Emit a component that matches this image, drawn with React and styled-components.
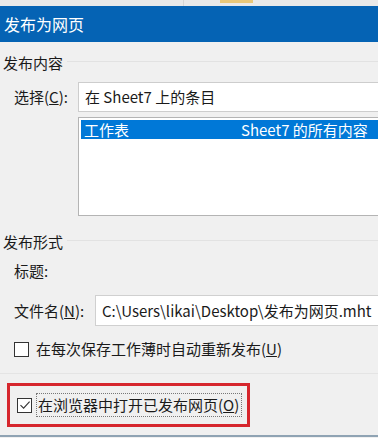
import styled, {createGlobalStyle} from 'styled-components'

const GlobalStyle = createGlobalStyle`
  html, body {
    margin: 0;
    padding: 0;
    background: #f0f0f0;
  }
  body {
    font-family: "Noto Sans CJK SC", "Noto Sans", sans-serif;
    color: #1a1a1a;
  }
`

const CJK = '"Noto Sans CJK SC", "Noto Sans", sans-serif'

export default function App() {
    return (
        <Window>
            <GlobalStyle />
            <TopStrip>
                <div className="sep" />
                <div className="tab" />
            </TopStrip>
            <TitleBar>发布为网页</TitleBar>
            <Body>
                <GroupTitle>发布内容</GroupTitle>
                <FieldRow top={9}>
                    <Label>选择(<u>C</u>):</Label>
                    <ComboBox>在 Sheet7 上的条目</ComboBox>
                </FieldRow>
                <ListRow>
                    <ListBox>
                        <ListItem selected>
                            <span className="name">工作表</span>
                            <span className="desc">Sheet7 的所有内容</span>
                        </ListItem>
                    </ListBox>
                </ListRow>
                <GroupTitle top={16}>发布形式</GroupTitle>
                <PlainLabel>标题:</PlainLabel>
                <FieldRow top={14}>
                    <Label wide>文件名(<u>N</u>):</Label>
                    <TextBox>C:\Users\likai\Desktop\发布为网页.mht</TextBox>
                </FieldRow>
                <CheckRow>
                    <CheckBox />
                    <span>在每次保存工作薄时自动重新发布(<u>U</u>)</span>
                </CheckRow>
                <Divider />
                <Highlight>
                    <CheckRow flush>
                        <CheckBox>
                            <svg width="12" height="12" viewBox="0 0 12 12">
                                <path d="M1.5 6.2 L4.6 9.2 L10.6 2.6" fill="none" stroke="#333" strokeWidth="1.1" />
                            </svg>
                        </CheckBox>
                        <Focused>在浏览器中打开已发布网页(<u>O</u>)</Focused>
                    </CheckRow>
                </Highlight>
            </Body>
            <BottomEdge />
        </Window>
    )
}

const Window = styled.div`
width: 378px;
height: 438px;
overflow: hidden;
background: #f0f0f0;
display: flex;
flex-direction: column;
`

const TopStrip = styled.div`
height: 6px;
background: #e9e9e9;
position: relative;
flex-shrink: 0;

.sep{
    position: absolute;
    left: 183px;
    top: 0;
    width: 1px;
    height: 6px;
    background: #d6d6d6;
}

.tab{
    position: absolute;
    left: 220px;
    top: 0;
    width: 33px;
    height: 3px;
    background: #e8c77a;
}
`

const TitleBar = styled.div`
height: 36px;
flex-shrink: 0;
background: #0563b4;
color: #fff;
font-family: ${CJK};
font-size: 16px;
line-height: 36px;
padding-left: 4px;
`

const Body = styled.div`
flex: 1;
display: flex;
flex-direction: column;
font-size: 15px;
line-height: 20px;
`

const GroupTitle = styled.div`
display: flex;
align-items: center;
gap: 4px;
margin-top: ${p => p.top || 11}px;
padding-left: 3px;
white-space: nowrap;

&::after{
    content: '';
    flex: 1;
    height: 1px;
    background: #e2e2e2;
    margin-top: -4px;
}
`

const FieldRow = styled.div`
display: flex;
align-items: center;
margin-top: ${p => p.top || 0}px;
`

const Label = styled.div`
width: ${p => p.wide ? 81 : 64}px;
padding-left: 14px;
flex-shrink: 0;
white-space: nowrap;
`

const ComboBox = styled.div`
flex: 1;
height: 30px;
box-sizing: border-box;
background: #fff;
border: 1px solid #cdcdcd;
border-right: none;
padding-left: 6px;
line-height: 28px;
white-space: nowrap;
`

const ListRow = styled.div`
display: flex;
padding-left: 78px;
margin-top: 5px;
`

const ListBox = styled.div`
flex: 1;
height: 99px;
box-sizing: border-box;
background: #fff;
border: 1px solid #b4b4b4;
border-right: none;
padding: 2px 0 0 2px;
`

const ListItem = styled.div`
display: flex;
height: 19px;
line-height: 19px;
background: ${p => p.selected ? '#0078d7' : 'transparent'};
color: ${p => p.selected ? '#fff' : '#1a1a1a'};
padding-left: 3px;
white-space: nowrap;

.name{
    width: 157px;
}
`

const PlainLabel = styled.div`
padding-left: 14px;
margin-top: 9px;
`

const TextBox = styled.div`
flex: 1;
height: 31px;
box-sizing: border-box;
background: #fff;
border: 1px solid #d0d0d0;
border-right: none;
padding-left: 6px;
line-height: 29px;
white-space: nowrap;
`

const CheckRow = styled.div`
display: flex;
align-items: center;
gap: 7px;
padding-left: ${p => p.flush ? 7 : 14}px;
margin-top: ${p => p.flush ? 0 : 13}px;
white-space: nowrap;
`

const CheckBox = styled.span`
width: 15px;
height: 15px;
box-sizing: border-box;
border: 1px solid #333;
background: #fff;
display: flex;
align-items: center;
justify-content: center;
flex-shrink: 0;
`

const Focused = styled.span`
outline: 1px dotted #777;
outline-offset: 1px;
padding-right: 1px;
margin-left: -1px;
`

const Divider = styled.div`
height: 1px;
background: #e4e4e4;
margin-top: 14px;
`

const Highlight = styled.div`
margin: 9px 0 0 7px;
width: 243px;
height: 44px;
box-sizing: border-box;
border: 3px solid #d6262d;
display: flex;
align-items: center;
`

const BottomEdge = styled.div`
height: 2px;
margin-top: auto;
margin-bottom: 1px;
background: #8fa3b3;
flex-shrink: 0;
`
